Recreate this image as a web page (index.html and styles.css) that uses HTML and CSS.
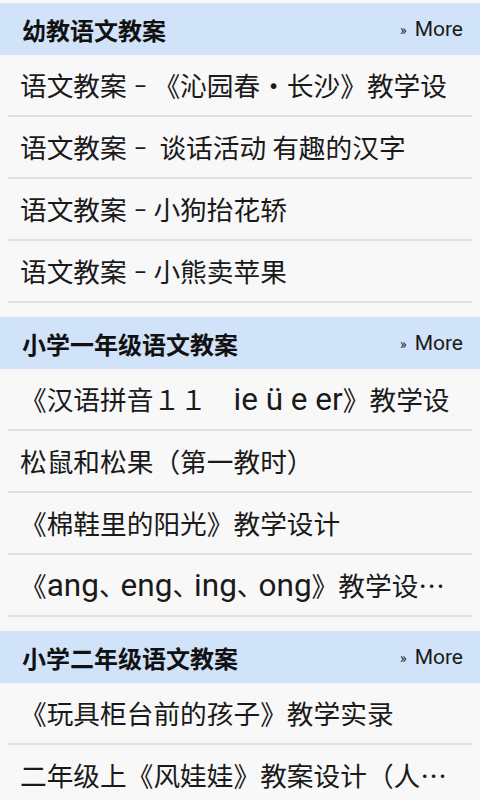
FILE: index.html
```html
<!DOCTYPE html>
<html lang="zh-CN">
<head>
<meta charset="utf-8">
<title>语文教案</title>
<link rel="stylesheet" href="styles.css">
</head>
<body>
<div class="page">
  <section class="section">
    <div class="section-head">
      <span class="section-title">幼教语文教案</span>
      <span class="more"><span class="raquo">»</span>More</span>
    </div>
    <ul class="list">
      <li class="item">语文教案<span class="dash">－</span>《沁园春·长沙》教学设</li>
      <li class="item">语文教案<span class="dash">－</span> 谈话活动 有趣的汉字</li>
      <li class="item">语文教案<span class="dash">－</span>小狗抬花轿</li>
      <li class="item">语文教案<span class="dash">－</span>小熊卖苹果</li>
    </ul>
  </section>
  <section class="section">
    <div class="section-head">
      <span class="section-title">小学一年级语文教案</span>
      <span class="more"><span class="raquo">»</span>More</span>
    </div>
    <ul class="list">
      <li class="item">《汉语拼音１１　<span class="lat">ie ü e er</span>》教学设</li>
      <li class="item">松鼠和松果（第一教时）</li>
      <li class="item">《棉鞋里的阳光》教学设计</li>
      <li class="item">《<span class="lat">ang</span><span class="comma">、</span><span class="lat">eng</span><span class="comma">、</span><span class="lat">ing</span><span class="comma">、</span><span class="lat">ong</span>》教学设…</li>
    </ul>
  </section>
  <section class="section">
    <div class="section-head">
      <span class="section-title">小学二年级语文教案</span>
      <span class="more"><span class="raquo">»</span>More</span>
    </div>
    <ul class="list">
      <li class="item">《玩具柜台前的孩子》教学实录</li>
      <li class="item">二年级上《风娃娃》教案设计（人…</li>
    </ul>
  </section>
</div>
</body>
</html>
```
FILE: styles.css
```css
html, body {
  margin: 0;
  padding: 0;
  background: #f8f8f8;
}
body {
  font-family: "Noto Sans CJK SC", Roboto, sans-serif;
  color: #1a1a1a;
}
.page {
  padding-top: 3px;
  display: flex;
  flex-direction: column;
  gap: 14px;
}
.section-head {
  height: 52px;
  background: #d1e3f9;
  display: flex;
  align-items: center;
  justify-content: space-between;
  padding: 0 17px 0 22px;
}
.section-title {
  font-size: 24px;
  font-weight: 700;
  color: #111;
}
.more {
  display: flex;
  align-items: baseline;
  font-family: Roboto, "Noto Sans", sans-serif;
  font-size: 21px;
  color: #1a1a1a;
}
.raquo {
  font-size: 14px;
  margin-right: 8px;
  position: relative;
  top: -1px;
}
.list {
  list-style: none;
  margin: 0;
  padding: 0;
}
.item {
  height: 60px;
  line-height: 60px;
  margin: 0 8px 0 8px;
  padding: 0 12px;
  border-bottom: 2px solid #e1e1e1;
  font-size: 26.7px;
  white-space: nowrap;
  overflow: hidden;
  text-overflow: ellipsis;
  color: #1a1a1a;
}
.lat {
  font-family: Roboto, "Noto Sans", sans-serif;
  font-size: 31.5px;
  line-height: 1;
}
.comma {
  letter-spacing: -5px;
}
.dash {
  display: inline-block;
  width: 1em;
  text-align: center;
  transform: scaleX(0.5);
}
```
